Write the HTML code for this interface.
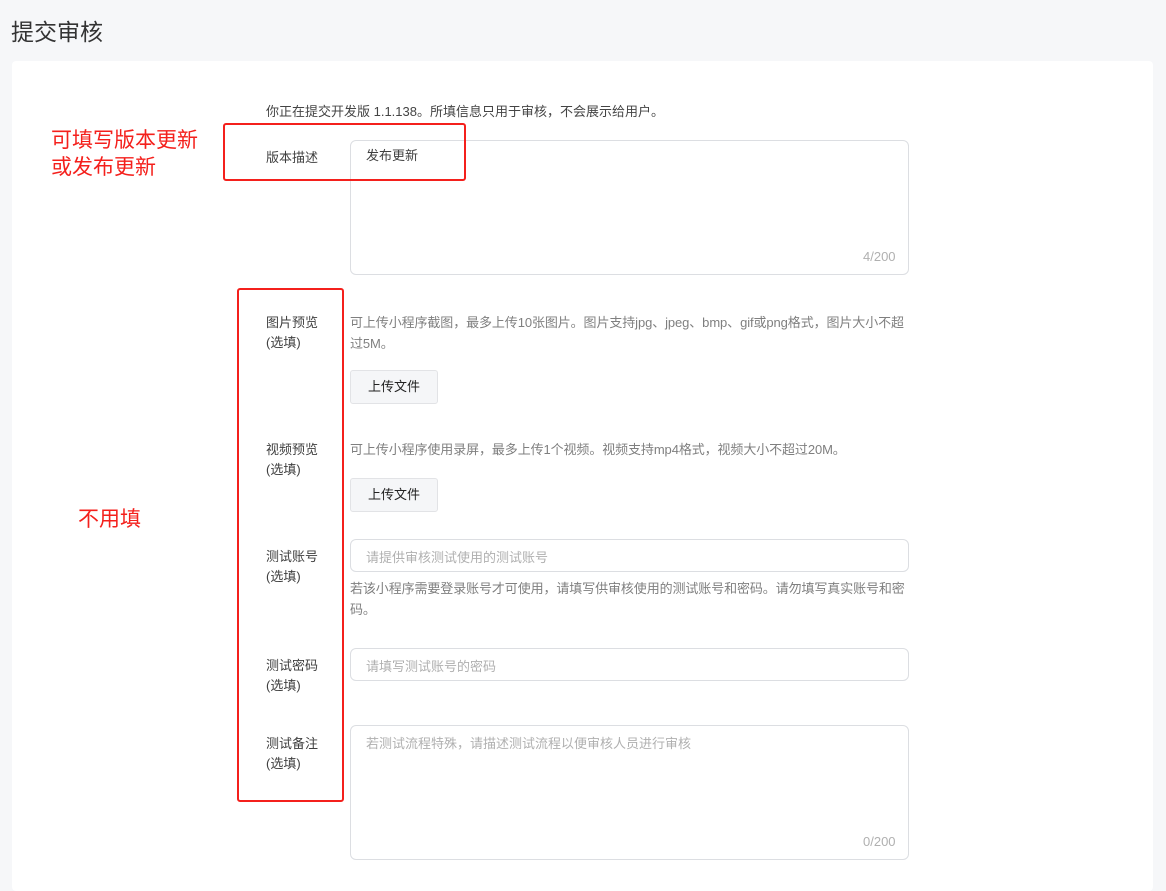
<!DOCTYPE html>
<html><head><meta charset="utf-8"><style>
body{margin:0;width:1166px;height:877px;background:#f6f7f9;font-family:"Liberation Sans","Noto Sans CJK SC",sans-serif;position:relative;overflow:hidden;color:#353535}
.a{position:absolute;white-space:nowrap}
.card{position:absolute;left:12px;top:61px;width:1141px;height:830px;background:#fff;border-radius:4px}
.lbl{font-size:13px;color:#3f3f3f;line-height:20px}
.hint{font-size:13px;color:#7f7f7f;line-height:21px;letter-spacing:-0.1px}
.box{position:absolute;border:1px solid #dcdee2;border-radius:6px;background:#fff}
.btn{position:absolute;width:86px;height:32px;border:1px solid #e2e3e6;border-radius:3px;background:#f5f6f8;font-size:13px;text-align:center;line-height:32px;color:#222}
.ph{font-size:13px;color:#b0b0b0}
.red{position:absolute;border:2px solid #f4201c;border-radius:3px}
.rt{color:#f4201c;font-size:21px;line-height:27px}
</style></head><body>
<div class="a" style="left:11px;top:13px;font-size:23px;color:#333">提交审核</div>
<div class="card"></div>
<div class="a lbl" style="left:266px;top:102px;color:#444">你正在提交开发版 1.1.138。所填信息只用于审核，不会展示给用户。</div>
<div class="a lbl" style="left:266px;top:148px">版本描述</div>
<div class="box" style="left:350px;top:140px;width:557px;height:133px"></div>
<div class="a lbl" style="left:366px;top:146px">发布更新</div>
<div class="a ph" style="left:863px;top:249px">4/200</div>

<div class="a lbl" style="left:266px;top:313px">图片预览<br>(选填)</div>
<div class="a hint" style="left:350px;top:312px">可上传小程序截图，最多上传10张图片。图片支持jpg、jpeg、bmp、gif或png格式，图片大小不超<br>过5M。</div>
<div class="btn" style="left:350px;top:370px">上传文件</div>

<div class="a lbl" style="left:266px;top:440px">视频预览<br>(选填)</div>
<div class="a hint" style="left:350px;top:439px">可上传小程序使用录屏，最多上传1个视频。视频支持mp4格式，视频大小不超过20M。</div>
<div class="btn" style="left:350px;top:478px">上传文件</div>

<div class="a lbl" style="left:266px;top:547px">测试账号<br>(选填)</div>
<div class="box" style="left:350px;top:539px;width:557px;height:31px"></div>
<div class="a ph" style="left:366px;top:547px">请提供审核测试使用的测试账号</div>
<div class="a hint" style="left:350px;top:578px">若该小程序需要登录账号才可使用，请填写供审核使用的测试账号和密码。请勿填写真实账号和密<br>码。</div>

<div class="a lbl" style="left:266px;top:656px">测试密码<br>(选填)</div>
<div class="box" style="left:350px;top:648px;width:557px;height:31px"></div>
<div class="a ph" style="left:366px;top:656px">请填写测试账号的密码</div>

<div class="a lbl" style="left:266px;top:734px">测试备注<br>(选填)</div>
<div class="box" style="left:350px;top:725px;width:557px;height:133px"></div>
<div class="a ph" style="left:366px;top:733px">若测试流程特殊，请描述测试流程以便审核人员进行审核</div>
<div class="a ph" style="left:863px;top:834px">0/200</div>

<div class="red" style="left:223px;top:123px;width:239px;height:54px"></div>
<div class="red" style="left:237px;top:288px;width:103px;height:510px"></div>
<div class="a rt" style="left:51px;top:127px">可填写版本更新<br>或发布更新</div>
<div class="a rt" style="left:78px;top:506px">不用填</div>
</body></html>
